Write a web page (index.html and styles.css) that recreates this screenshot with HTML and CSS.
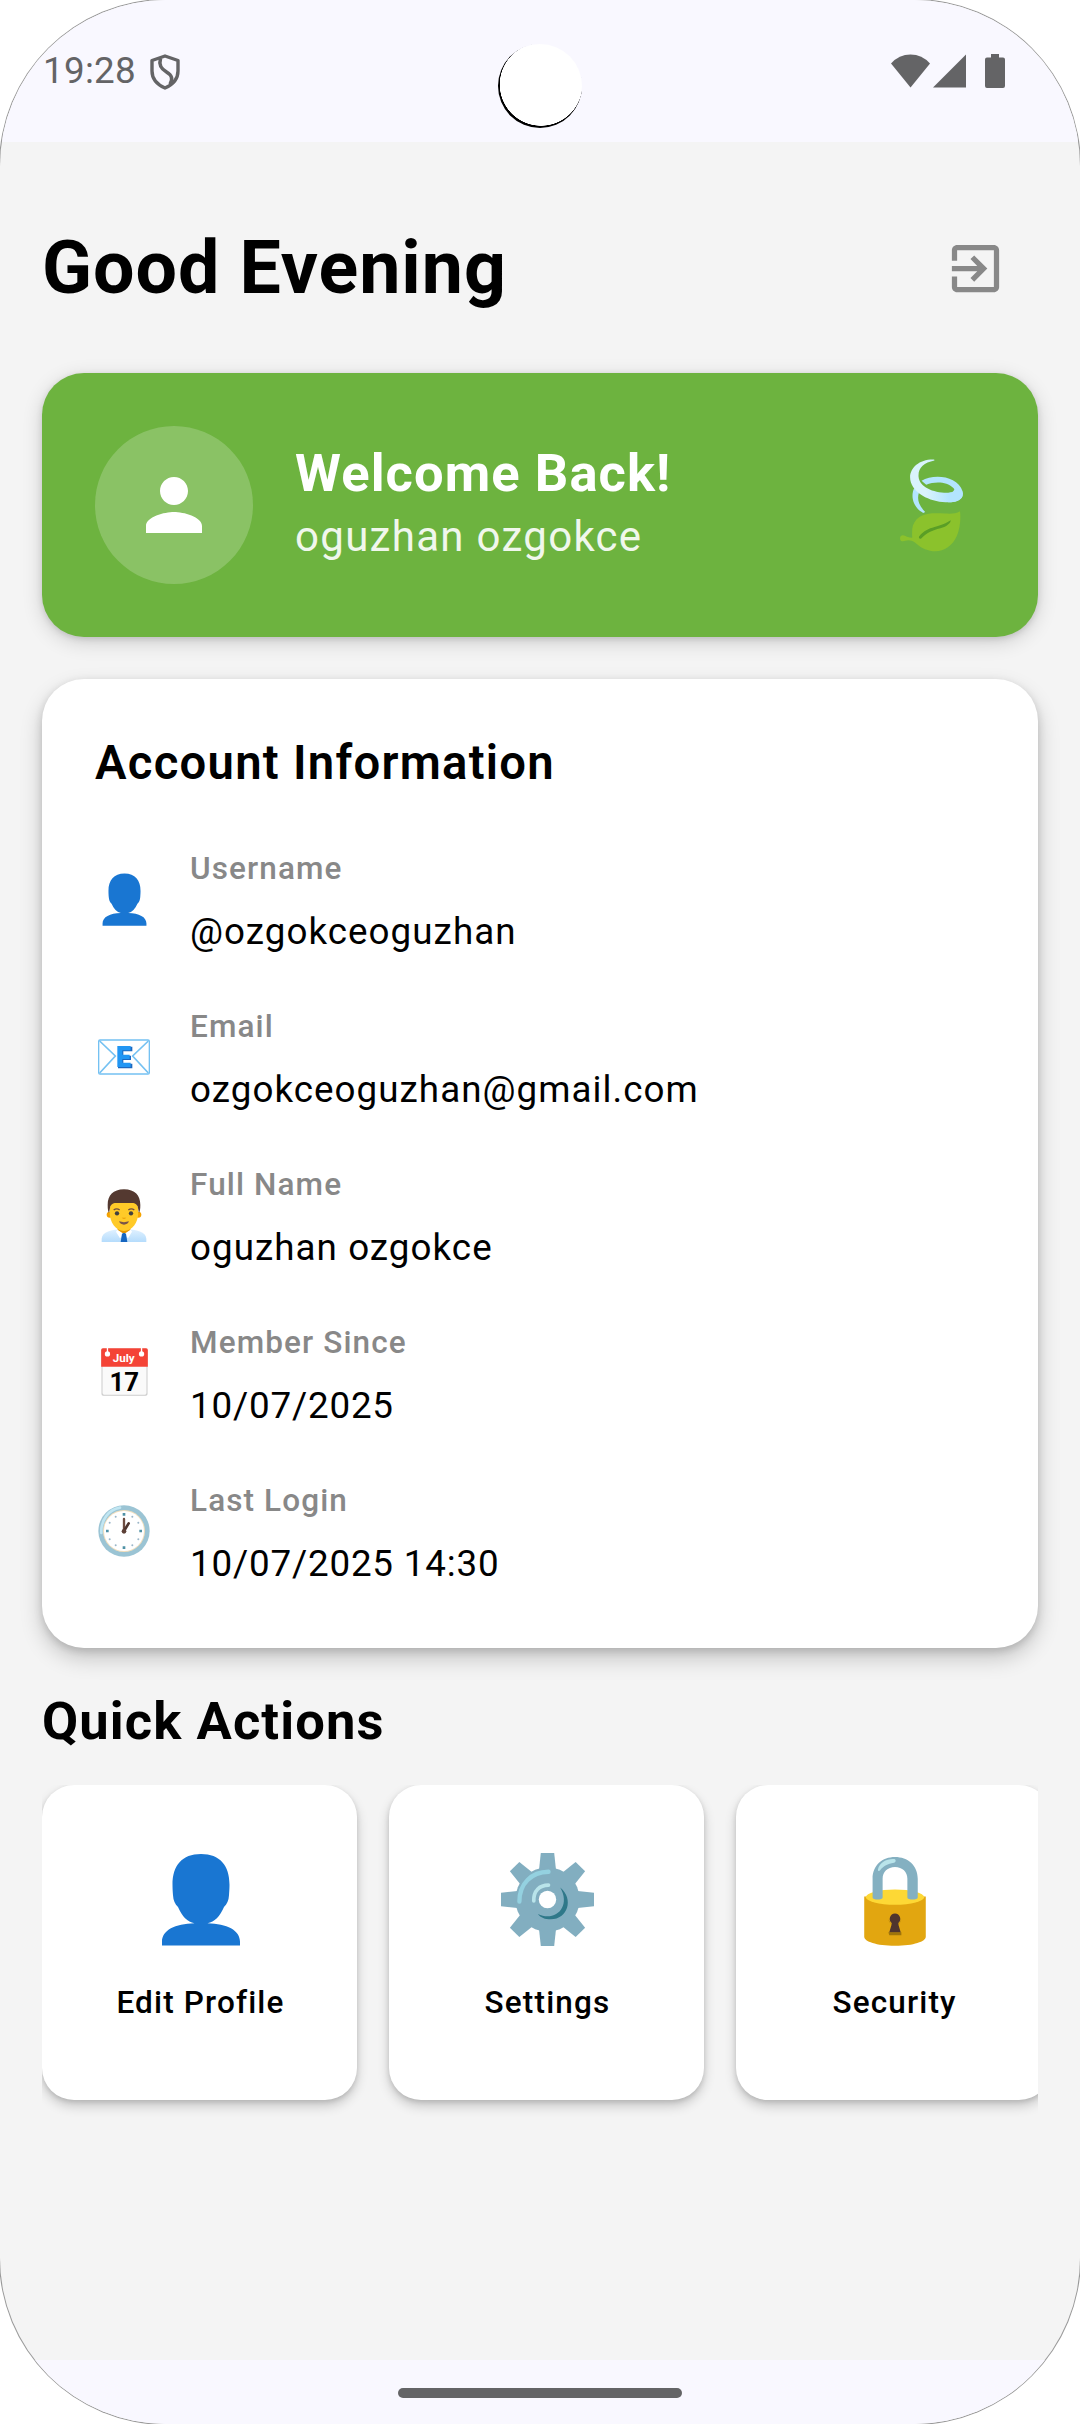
FILE: index.html
```html
<!DOCTYPE html>
<html lang="en">
<head>
<meta charset="utf-8">
<title>Profile</title>
<link rel="stylesheet" href="styles.css">
</head>
<body>
<svg class="defs" width="0" height="0">
  <symbol id="bust" viewBox="0 0 80 88">
    <path fill="#1976d2" d="M40 1C21 1 11.500 12 11.500 30c0 4 .3 7 .5 10 .3 5 2 8.500 5 11 4 9 9.500 14 16.500 15.500C14 67 1 73 1 84v3.500h78V84C79 73 66 67 46.500 66.500 53.500 65 59 60 63 51c3-2.500 4.700-6 5-11 .2-3 .5-6 .5-10C68.500 12 59 1 40 1z"/>
  </symbol>
</svg>
<div class="screen">
  <header class="status">
    <div class="status-left">
      <span class="clock">19:28</span>
      <svg class="shield" viewBox="0 0 30 36" fill="none" stroke="#646466" stroke-width="3.400" stroke-linejoin="round"><path d="M15 2 28 6.500V17c0 7.500-5 13.500-13 17C7 30.500 2 24.500 2 17V6.500z"/><path d="M10.500 4.500c-2 7 1 10.500 6 13.500s7 6.500 3.500 12.500" stroke-width="3.600"/></svg>
    </div>
    <div class="status-right">
      <svg class="wifi" viewBox="0 0 39 34"><path fill="#646466" d="M19.500 33.500 0 9.500Q8 .5 19.500.5T39 9.500z"/></svg>
      <svg class="signal" viewBox="0 0 33 34"><path fill="#646466" d="M33 .5v33H0z"/></svg>
      <svg class="battery" viewBox="0 0 20 34"><path fill="#646466" d="M6 0h8v3.500h4a2 2 0 0 1 2 2V32a2 2 0 0 1-2 2H2a2 2 0 0 1-2-2V5.500a2 2 0 0 1 2-2h4z"/></svg>
    </div>
    <div class="camera"></div>
  </header>

  <main class="content">
    <div class="top">
      <h1 class="greeting">Good Evening</h1>
      <div class="logout"><svg width="63" height="63" viewBox="0 0 24 24"><path fill="#888" d="M10.090 15.590 11.500 17l5-5-5-5-1.410 1.410L12.670 11H3v2h9.670l-2.580 2.590zM19 3H5c-1.110 0-2 .9-2 2v4h2V5h14v14H5v-4H3v4c0 1.100.89 2 2 2h14c1.100 0 2-.9 2-2V5c0-1.100-.9-2-2-2z"/></svg></div>
    </div>

    <section class="welcome">
      <div class="avatar"><svg width="84" height="84" viewBox="0 0 24 24"><path fill="#fff" d="M12 12c2.210 0 4-1.790 4-4s-1.790-4-4-4-4 1.790-4 4 1.790 4 4 4zm0 2c-2.670 0-8 1.340-8 4v2h16v-2c0-2.660-5.330-4-8-4z"/></svg></div>
      <div class="welcome-text">
        <div class="welcome-title">Welcome Back!</div>
        <div class="welcome-name">oguzhan ozgokce</div>
      </div>
      <svg class="leaf" viewBox="119 116 190 279">
        <defs><linearGradient id="wind" x1="0" y1="0" x2="1" y2="0"><stop offset=".3" stop-color="#d9f3fc"/><stop offset=".75" stop-color="#b3e5ff"/></linearGradient></defs>
        <path fill="#b3e5ff" d="M184 181c36-22 108-16 124 32 6 22-16 32-44 33l2-29c20 0 22-6 14-14-20-20-56-20-82-10zM162 203c-12 24-4 58 27 75l6-3c-20-20-25-38-19-58z"/>
        <path fill="url(#wind)" d="M222 117c-50-2-82 33-70 69 13 38 64 60 114 60 20 0 36-6 41-18 2-12-6-24-18-28-6 1-4 16-20 17-43 3-92-15-94-48-2-27 15-42 48-49z"/>
        <path fill="#8bc22c" d="M300 273c-13 8-27 8-46 7-40-3-82-3-96 36-3 10-3 22-2 37-12-1-16-2-22-6-8-4-15 0-15 7 0 10 9 11 16 8 8-3 20-2 29 5 46 42 103 34 127-21 8-20 12-47 9-73z"/>
        <path fill="#5a9e26" d="M177 348c14-17 28-23 46-28 22-5 35-11 49-20 0 8-11 19-31 24-26 6-41 14-58 31-5 3-9-3-6-7z"/>
      </svg>
    </section>

    <section class="account">
      <h2 class="account-title">Account Information</h2>
      <div class="row">
        <div class="row-icon"><svg width="45" height="53" viewBox="0 0 80 88" preserveAspectRatio="none"><use href="#bust"/></svg></div>
        <div><div class="label">Username</div><div class="value">@ozgokceoguzhan</div></div>
      </div>
      <div class="row">
        <div class="row-icon"><svg width="52" height="36" viewBox="0 0 156 106"><rect x="2" y="2" width="152" height="102" rx="4" fill="#fff" stroke="#74c1f2" stroke-width="4"/><path d="m5 5 47 45L5 101M151 5l-47 45 47 51" fill="none" stroke="#74c1f2" stroke-width="5"/><path d="M60 22h43v14H76v13h23v13H76v11h27v14H60z" fill="#1c68bf"/><path d="M58 20h40v13H73v13h22v13H73v11h25v13H58z" fill="#2196f3"/></svg></div>
        <div><div class="label">Email</div><div class="value">ozgokceoguzhan@gmail.com</div></div>
      </div>
      <div class="row">
        <div class="row-icon"><svg width="46" height="53" viewBox="0 0 138 159"><defs><linearGradient id="shirt" x1="0" y1="0" x2="0" y2="1"><stop offset="0" stop-color="#e0f1ff"/><stop offset="1" stop-color="#b5dcfc"/></linearGradient></defs><path d="M2 159v-10c2-20 27-28 67-28s65 8 67 28v10z" fill="url(#shirt)"/><path d="M50 112h38v12l-19 14-19-14z" fill="#e59600"/><path d="m49 122 20 13-12 13-12-20zm40 0-20 13 12 13 12-20z" fill="#fff"/><path d="m63 134 6-3 6 3 4 25H59z" fill="#1565c0"/><circle cx="26" cy="77" r="9" fill="#f5a300"/><circle cx="112" cy="77" r="9" fill="#f5a300"/><path d="M69 14c-29 0-43 20-43 56 0 31 19 56 43 56s43-25 43-56c0-36-14-56-43-56z" fill="#ffca28"/><path d="M69 1C36 1 20 20 20 48c0 12 1 18 4 24l4-20c5-9 11-10 18-10h46c7 0 13 1 18 10l4 20c3-6 4-12 4-24C118 20 102 1 69 1z" fill="#543930"/><path d="M38 63q9-7 18 0m26 0q9-7 18 0" fill="none" stroke="#6d4c41" stroke-width="4"/><circle cx="48" cy="73" r="6.500" fill="#404040"/><circle cx="90" cy="73" r="6.500" fill="#404040"/><path d="M62 86h14q-7 6-14 0z" fill="#e59600"/><path d="M54 97q15 5 30 0-4 10-15 10T54 97z" fill="#795548"/></svg></div>
        <div><div class="label">Full Name</div><div class="value">oguzhan ozgokce</div></div>
      </div>
      <div class="row">
        <div class="row-icon raised"><svg width="47" height="48" viewBox="0 0 141 145"><rect x="1" y="2" width="139" height="142" rx="5" fill="#ccc"/><path d="M4 40h133v96q0 5-5 5H9q-5 0-5-5z" fill="#fafafa"/><path d="M0 57V6q0-5 5-5h131q5 0 5 5v51z" fill="#f44336"/><path d="M19 0v16M122 0v16" stroke="#fff" stroke-width="4"/><circle cx="19" cy="18" r="8" fill="#fff"/><circle cx="122" cy="18" r="8" fill="#fff"/><text x="68" y="42" class="cal-month">July</text><text x="70" y="129" class="cal-day">17</text></svg></div>
        <div><div class="label">Member Since</div><div class="value date">10/07/2025</div></div>
      </div>
      <div class="row">
        <div class="row-icon"><svg width="52" height="52" viewBox="0 0 156 156"><circle cx="78" cy="78" r="77" fill="#9bc4d4"/><circle cx="78" cy="78" r="63" fill="#f3dfbd"/><circle cx="78" cy="78" r="60" fill="#fff"/><path d="M10 84C8 44 32 14 66 8" fill="none" stroke="#c1e6f2" stroke-width="8" stroke-linecap="round"/><g fill="#4f91a5"><path d="M74 24h8v8h-8zM74 124h8v8h-8zM24 74h8v8h-8zM124 74h8v8h-8z"/><g fill="#9bb6c8"><circle cx="103" cy="35" r="3"/><circle cx="121" cy="53" r="3"/><circle cx="121" cy="103" r="3"/><circle cx="103" cy="121" r="3"/><circle cx="53" cy="121" r="3"/><circle cx="35" cy="103" r="3"/><circle cx="35" cy="53" r="3"/><circle cx="53" cy="35" r="3"/></g></g><path d="M78 78V42" stroke="#6d4c41" stroke-width="7" stroke-linecap="round"/><path d="m78 78 14-23" stroke="#4e342e" stroke-width="8" stroke-linecap="round"/><circle cx="78" cy="79" r="7" fill="#5d4037"/></svg></div>
        <div><div class="label">Last Login</div><div class="value date">10/07/2025 14:30</div></div>
      </div>
    </section>

    <h2 class="actions-title">Quick Actions</h2>
    <div class="actions">
      <div class="action">
        <div class="action-icon"><svg width="80" height="93" viewBox="0 0 80 88" preserveAspectRatio="none"><use href="#bust"/></svg></div>
        <div class="action-label">Edit Profile</div>
      </div>
      <div class="action">
        <div class="action-icon"><svg width="93" height="93" viewBox="-139 -139 278 278">
          <g fill="#82aec0"><path id="tooth" d="M-20-139h40l6 56h-52z"/><use href="#tooth" transform="rotate(45)"/><use href="#tooth" transform="rotate(90)"/><use href="#tooth" transform="rotate(135)"/><use href="#tooth" transform="rotate(180)"/><use href="#tooth" transform="rotate(225)"/><use href="#tooth" transform="rotate(270)"/><use href="#tooth" transform="rotate(315)"/><circle r="96"/></g>
          <circle r="26" fill="#fff"/>
          <path d="M-84 6C-84-48-48-82 3-83" fill="none" stroke="#94d1e0" stroke-width="13" stroke-linecap="round"/>
          <path d="M-41 4C-42-26-24-43 3-43" fill="none" stroke="#b9e4ea" stroke-width="11" stroke-linecap="round"/>
          <path d="M38-36C80-2 60 59 10 59-8 59-20 54-29 43 22 68 72 23 38-36z" fill="#2f7889"/>
        </svg></div>
        <div class="action-label">Settings</div>
      </div>
      <div class="action">
        <div class="action-icon"><svg width="62" height="93" viewBox="431 284 184 278">
          <path d="M431 414h184v120c0 14-36 27-92 27s-92-13-92-27z" fill="#e2a610"/>
          <ellipse cx="523" cy="416" rx="87" ry="23" fill="#fdd835"/>
          <path d="M456 417v-56c0-40 29-65 67-65s68 25 68 65v56c0 8-31 8-31 0v-56c0-20-15-35-37-35s-37 15-37 35v56c0 8-30 8-30 0z" fill="#84b0c1"/>
          <path d="M472 333c5-21 27-33 49-31 6 2 5 10-1 11-19 3-31 9-42 23-3 3-7 1-6-3z" fill="#b9e4ea"/>
          <path d="M503 521h39v9h-36zM503 483a20 18 0 0 0 39 0l-8 15h-22z" fill="#9e740b"/>
          <path d="M523 465a16 16 0 0 1 9 29l8 27h-34l8-27a16 16 0 0 1 9-29z" fill="#4e342e"/>
        </svg></div>
        <div class="action-label">Security</div>
      </div>
    </div>
  </main>

  <footer class="nav"><div class="pill"></div></footer>
</div>
</body>
</html>
```
FILE: styles.css
```css
* { box-sizing: border-box; }
body { margin: 0; background: #fff; font-family: Roboto, "Noto Sans", sans-serif; color: #000; }
h1, h2 { margin: 0; }
svg { display: block; flex: none; }
.defs { position: absolute; }

.screen {
  width: 1080px; height: 2424px;
  display: flex; flex-direction: column;
  background: #f4f4f4; border-radius: 166px; overflow: hidden;
  box-shadow: 0 0 0 1px #999;
}
.status {
  position: relative; height: 142px; flex: none; background: #f9f8ff;
  display: flex; justify-content: space-between; align-items: flex-start;
  padding: 54px 75px 0 43px;
}
.status-left, .status-right { display: flex; }
.clock { font-size: 36.75px; line-height: 34px; letter-spacing: .3px; color: #646466; width: 107px; }
.shield { width: 30px; height: 36px; }
.wifi { width: 39px; height: 34px; }
.signal { width: 33px; height: 34px; margin: 0 19px 0 3px; }
.battery { width: 20px; height: 34px; }
.camera {
  position: absolute; left: 498px; top: 44px; width: 84px; height: 84px;
  border-radius: 50%; background: radial-gradient(circle at 43px 40.500px, #fff 41px, #000 41.500px);
}

.content { flex: 1; padding: 0 42px; display: flex; flex-direction: column; }
.top { height: 126px; margin-top: 63px; display: flex; justify-content: space-between; align-items: center; }
.greeting { font-size: 73.5px; line-height: 84px; font-weight: 700; letter-spacing: .95px; }
.logout { width: 126px; height: 126px; display: flex; align-items: center; justify-content: center; }

.welcome {
  margin-top: 42px; height: 264px; flex: none; border-radius: 42px; background: #6db33f;
  padding: 0 75px 0 53px; display: flex; align-items: center;
  box-shadow: 0 5px 20px rgba(0,0,0,.16), 0 2px 6px rgba(0,0,0,.12);
}
.avatar { width: 158px; height: 158px; border-radius: 50%; background: rgba(255,255,255,.2); display: flex; align-items: center; justify-content: center; }
.welcome-text { flex: 1; margin-left: 42px; color: #fff; }
.welcome-title { font-size: 52.5px; line-height: 62px; padding-bottom: 1px; font-weight: 700; letter-spacing: 1.07px; }
.welcome-name { font-size: 42px; line-height: 63px; letter-spacing: 1.3px; opacity: .9; }
.leaf { width: 63px; height: 93px; }

.account {
  margin-top: 42px; height: 969px; flex: none; border-radius: 42px; background: #fff;
  padding: 53px 53px 0;
  box-shadow: 0 10px 22px rgba(0,0,0,.2), 0 3px 8px rgba(0,0,0,.14);
}
.account-title { font-size: 47.25px; line-height: 63px; font-weight: 600; letter-spacing: 1.25px; margin-bottom: 42px; }
.row { height: 126px; margin-bottom: 32px; display: flex; align-items: center; }
.row-icon { width: 58px; margin-right: 37px; padding-bottom: 2px; display: flex; justify-content: center; }
.row-icon.raised { padding-bottom: 5px; }
.label { font-size: 31.5px; line-height: 63px; font-weight: 500; letter-spacing: 1.12px; color: #888; }
.value { font-size: 36.75px; line-height: 63px; letter-spacing: 1.05px; }
.value.date { letter-spacing: .83px; }
.cal-month { font: 700 35px Roboto, sans-serif; fill: #fff; text-anchor: middle; }
.cal-day { font: 700 78px Roboto, sans-serif; fill: #000; text-anchor: middle; }

.actions-title { margin-top: 42px; font-size: 52.5px; line-height: 63px; font-weight: 700; letter-spacing: 1.1px; }
.actions { margin-top: 32px; height: 347px; display: flex; gap: 32px; overflow: hidden; }
.action {
  width: 315px; height: 315px; flex: none; border-radius: 32px; background: #fff;
  display: flex; flex-direction: column; align-items: center; padding: 68px 0 0 2px;
  box-shadow: 0 6px 12px rgba(0,0,0,.19), 0 2px 5px rgba(0,0,0,.12);
}
.action-icon { height: 93px; }
.action-label { margin-top: 25px; font-size: 31.5px; line-height: 63px; font-weight: 500; letter-spacing: 1.15px; }

.nav { height: 64px; flex: none; background: #f9f8ff; display: flex; justify-content: center; padding-top: 28px; }
.pill { width: 284px; height: 10px; border-radius: 5px; background: #646466; }
```
